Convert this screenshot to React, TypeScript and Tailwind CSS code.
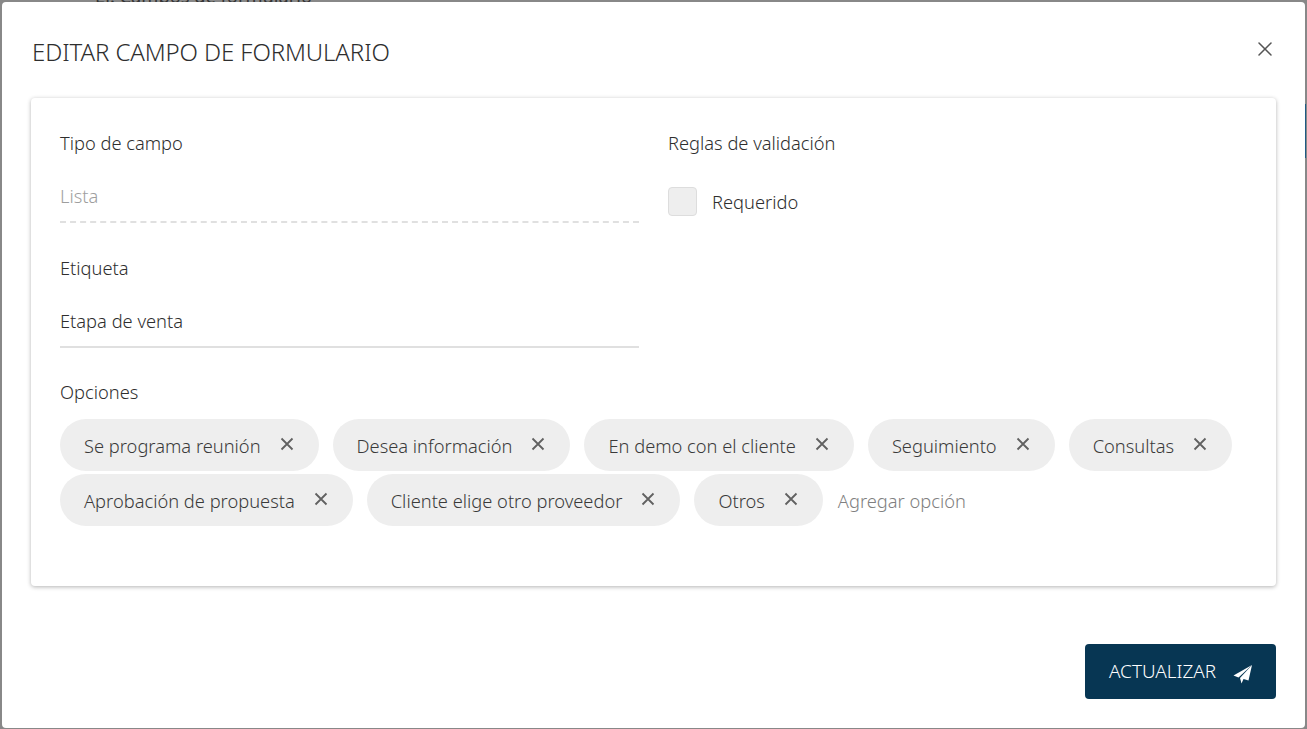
import { X } from 'lucide-react';

const row1 = ['Se programa reunión', 'Desea información', 'En demo con el cliente', 'Seguimiento', 'Consultas'];
const row2 = ['Aprobación de propuesta', 'Cliente elige otro proveedor', 'Otros'];

function Chip({ label }: { label: string }) {
    return (
        <div className="flex h-[52px] items-center rounded-full bg-[#eeeeee] pl-6 pr-[25px]">
            <span className="mt-0.5 text-[18.3px] font-[350] text-[#3a3a3a]">{label}</span>
            <span className="ml-[19px] -mt-[3px] flex items-center text-[#616161]">
                <svg width="14" height="14" viewBox="0 0 14 14" fill="none" stroke="currentColor" strokeWidth="1.8">
                    <path d="M1.5 1.5 12.5 12.5M12.5 1.5 1.5 12.5" />
                </svg>
            </span>
        </div>
    );
}

export default function App() {
    return (
        <div className="relative h-[729px] w-[1307px] overflow-hidden bg-[#888888] pt-0.5 pl-0.5 pr-0.5 pb-px font-['Noto_Sans',sans-serif]">
            {/* page behind the modal, only slivers show */}
            <div className="absolute left-[95px] -top-[16px] text-[18.3px] leading-[24px] text-[#333333]">Ej. Campos de formulario</div>
            <div className="absolute right-px top-[104px] h-[54px] w-px bg-[#1f5a85]" />

            <div className="relative flex h-full flex-col rounded bg-white">
                <div className="flex h-[96px] items-start justify-between pl-[30px] pr-[28px] pt-[32px]">
                    <h1 className="text-[24px] font-[350] leading-[36px] text-[#2e2e2e] tracking-[-0.1px]">EDITAR CAMPO DE FORMULARIO</h1>
                    <X size={24} strokeWidth={1.5} className="mt-[3px] text-[#555555]" />
                </div>

                <div className="mx-[29px] h-[488px] rounded bg-white pl-[29px] pr-[30px] pt-8 shadow-[0_1px_4px_rgba(0,0,0,0.3)]">
                    <div className="flex gap-[29px]">
                        <div className="w-[579px]">
                            <div className="text-[18.3px] font-[350] leading-[26px] text-[#2e2e2e]">Tipo de campo</div>
                            <div className="mt-[21px] h-[46px] border-b-2 border-dashed border-[#e0e0e0] text-[18.3px] font-[350] leading-[38px] text-[#9e9e9e]">Lista</div>
                            <div className="mt-[32px] text-[18.3px] font-[350] leading-[26px] text-[#2e2e2e]">Etiqueta</div>
                            <div className="mt-[21px] h-[46px] border-b-2 border-[#e0e0e0] text-[18.3px] font-[350] leading-[38px] text-[#2e2e2e]">Etapa de venta</div>
                        </div>
                        <div>
                            <div className="text-[18.3px] font-[350] leading-[26px] text-[#2e2e2e]">Reglas de validación</div>
                            <div className="mt-[29px] flex items-center gap-[15px]">
                                <div className="h-[29px] w-[29px] rounded border border-[#dddddd] bg-[#eeeeee]" />
                                <span className="mt-0.5 text-[18.3px] font-[350] leading-[30px] text-[#2e2e2e]">Requerido</span>
                            </div>
                        </div>
                    </div>

                    <div className="mt-[31px] text-[18.3px] font-[350] leading-[26px] text-[#2e2e2e]">Opciones</div>
                    <div className="mt-[14px] flex flex-col gap-[3px]">
                        <div className="flex gap-[14px]">
                            {row1.map(label => <Chip key={label} label={label} />)}
                        </div>
                        <div className="flex items-center gap-[14px]">
                            {row2.map(label => <Chip key={label} label={label} />)}
                            <span className="ml-px mt-0.5 text-[18.3px] font-[350] text-[#808080]">Agregar opción</span>
                        </div>
                    </div>
                </div>

                <div className="mr-[29px] mt-[58px] flex justify-end">
                    <button className="flex h-[55px] w-[191px] items-center gap-[17px] rounded bg-[#073653] pl-6 text-[18.9px] font-[350] text-white">
                        ACTUALIZAR
                        <svg width="20" height="20" viewBox="0 0 20 20" fill="currentColor" className="mt-1">
                            <path d="M19 1 .5 11.5l5 2z" />
                            <path d="M19 1 7 14l1.5 5.5 2-4.5 5 1.5z" />
                        </svg>
                    </button>
                </div>
            </div>
        </div>
    );
}
